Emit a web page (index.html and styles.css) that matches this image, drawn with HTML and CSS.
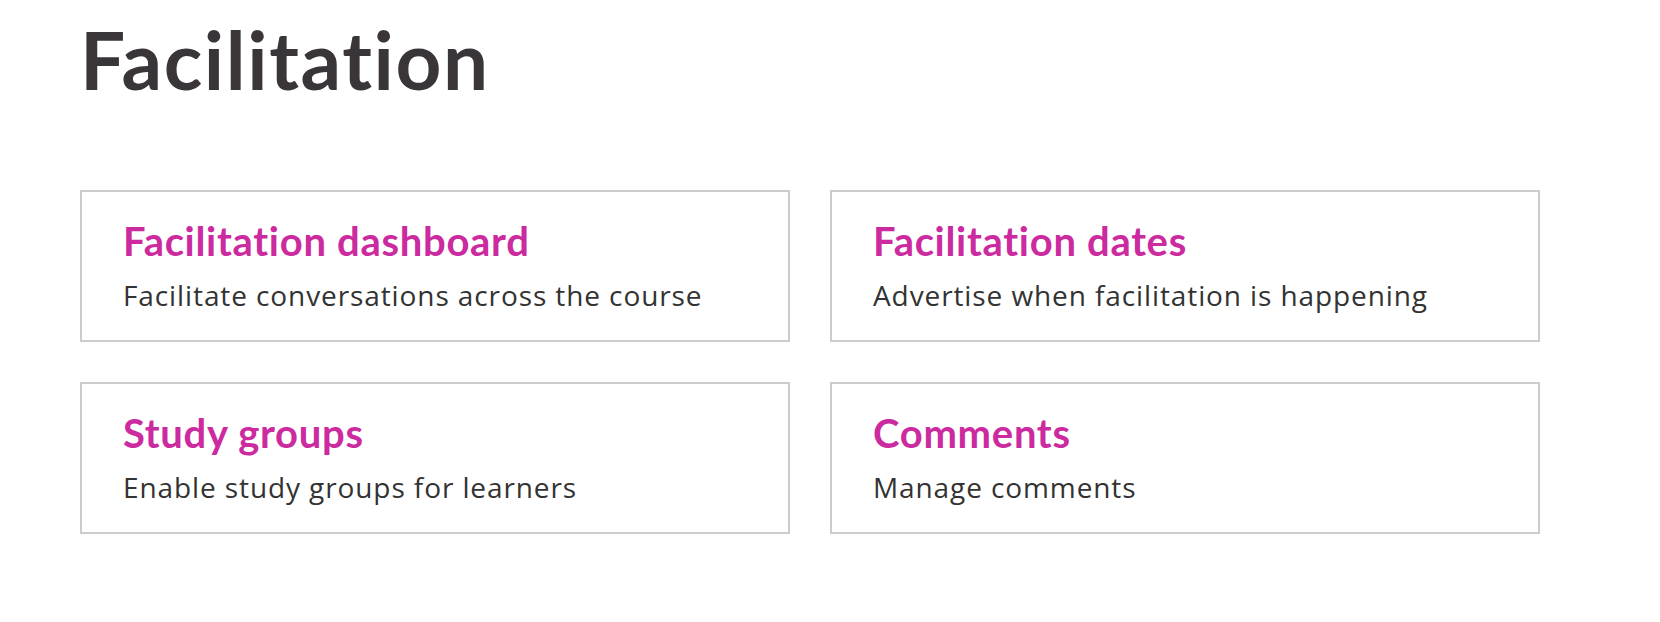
FILE: index.html
```html
<!DOCTYPE html>
<html lang="en">
<head>
<meta charset="utf-8">
<title>Facilitation</title>
<link rel="stylesheet" href="styles.css">
</head>
<body>
<main class="page">
  <h1 class="page-title">Facilitation</h1>
  <div class="cards">
    <a class="card" href="#">
      <span class="card-title">Facilitation dashboard</span>
      <span class="card-desc">Facilitate conversations across the course</span>
    </a>
    <a class="card" href="#">
      <span class="card-title">Facilitation dates</span>
      <span class="card-desc">Advertise when facilitation is happening</span>
    </a>
    <a class="card" href="#">
      <span class="card-title">Study groups</span>
      <span class="card-desc">Enable study groups for learners</span>
    </a>
    <a class="card" href="#">
      <span class="card-title">Comments</span>
      <span class="card-desc">Manage comments</span>
    </a>
  </div>
</main>
</body>
</html>
```

FILE: styles.css
```css
* { box-sizing: border-box; }
html, body { margin: 0; padding: 0; background: #fff; }
body { font-family: Lato, "Open Sans", sans-serif; color: #333; }
.page { padding: 11px 80px 0 80px; }
.page-title {
  margin: 0;
  font-size: 80px;
  line-height: 96px;
  font-weight: 700;
  color: #393539;
  letter-spacing: 1.6px;
}
.cards {
  margin-top: 83px;
  display: grid;
  grid-template-columns: 710px 710px;
  gap: 40px;
}
.card {
  display: flex;
  flex-direction: column;
  height: 152px;
  border: 2px solid #cccccc;
  padding: 25px 40px 0 41px;
  text-decoration: none;
}
.card-title {
  font-size: 40px;
  line-height: 48px;
  font-weight: 700;
  color: #cc2a9f;
  letter-spacing: 0.7px;
}
.card-desc {
  margin-top: 12px;
  font-family: "Open Sans", Lato, sans-serif;
  font-size: 28px;
  line-height: 36px;
  letter-spacing: 0.9px;
  color: #333;
}
```
